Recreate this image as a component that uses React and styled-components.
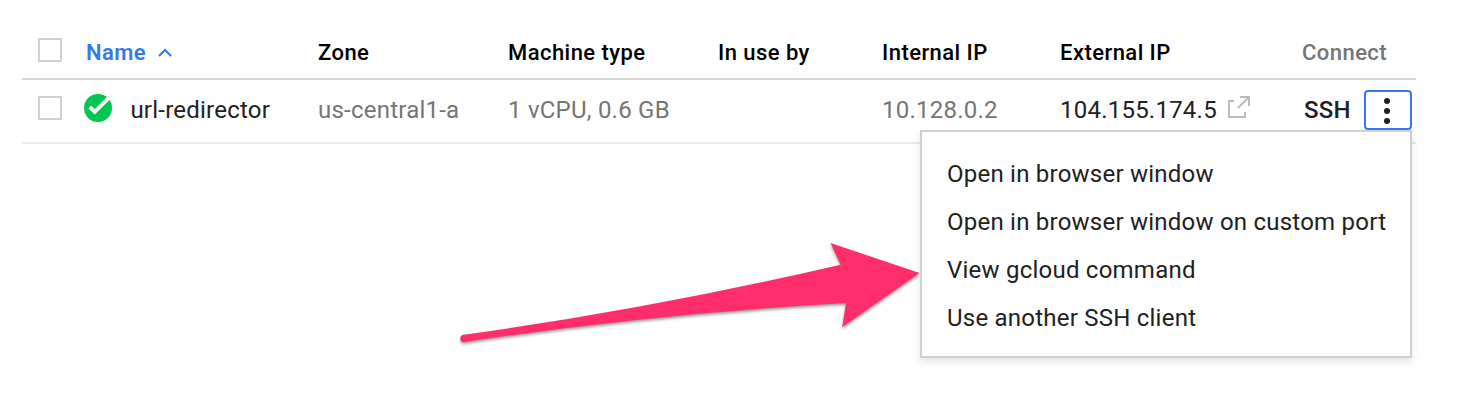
import React from 'react';
import styled, { createGlobalStyle } from 'styled-components';

const GlobalStyle = createGlobalStyle`
  body {
    margin: 0;
    background: #fff;
    font-family: Roboto, "Liberation Sans", sans-serif;
  }
`;

const Page = styled.main`
  position: relative;
  box-sizing: border-box;
  width: 1470px;
  height: 416px;
  padding: 22px 54px 0 22px;
  overflow: hidden;
`;

const Row = styled.div`
  display: grid;
  grid-template-columns: 64px 232px 190px 210px 164px 178px 242px 114px;
  box-sizing: border-box;
`;

const HeaderRow = styled(Row)`
  height: 58px;
  border-bottom: 2px solid #d6d6d6;
`;

const BodyRow = styled(Row)`
  height: 64px;
  border-bottom: 2px solid #ebebeb;
`;

const CheckCell = styled.div`
  padding: 16px 0 0 16px;
`;

const Checkbox = styled.div`
  box-sizing: border-box;
  width: 24px;
  height: 24px;
  border: 2px solid #d0d0d0;
`;

const HeaderCell = styled.div`
  display: flex;
  align-items: center;
  height: 56px;
  padding-top: 2px;
  color: ${(p) => p.$color || '#000'};
  font-size: 22px;
  font-weight: ${(p) => p.$weight || 500};
  letter-spacing: 0.45px;
  white-space: nowrap;
`;

const SortArrow = styled.svg`
  margin: 1px 0 0 12px;
`;

const Cell = styled.div`
  display: flex;
  align-items: center;
  height: 60px;
  color: ${(p) => (p.$strong ? '#212121' : '#757575')};
  font-size: 24px;
  letter-spacing: 0.23px;
  white-space: nowrap;
`;

const NameCell = styled(Cell)`
  gap: 18.4px;
  margin-left: -2px;
`;

const StatusIcon = styled.svg`
  flex: none;
  margin-top: -4px;
`;

const LinkIcon = styled.svg`
  flex: none;
  margin: -6px 0 0 11px;
`;

const ConnectCell = styled.div`
  display: flex;
  justify-content: space-between;
  padding: 0 4px 0 2px;
`;

const SshButton = styled.div`
  color: #212121;
  font-size: 24px;
  font-weight: 500;
  line-height: 60px;
  letter-spacing: 0.2px;
`;

const MoreButton = styled.div`
  display: flex;
  align-items: center;
  justify-content: center;
  box-sizing: border-box;
  width: 48px;
  height: 40px;
  margin-top: 10px;
  border: 2px solid #3878ee;
  border-radius: 4px;
`;

const Menu = styled.div`
  position: absolute;
  top: 130px;
  left: 920px;
  box-sizing: border-box;
  width: 492px;
  height: 228px;
  padding: 18px 25px 14px;
  border: 2px solid #d0d0d0;
  background: #fff;
  box-shadow: 0 4px 8px rgba(0, 0, 0, 0.1);
`;

const MenuItem = styled.div`
  height: 48px;
  color: #212121;
  font-size: 24px;
  line-height: 48px;
  letter-spacing: 0.23px;
  white-space: nowrap;
`;

const Arrow = styled.svg`
  position: absolute;
  top: 230px;
  left: 440px;
  filter: drop-shadow(0 2px 1.5px rgba(0, 0, 0, 0.4));
`;

const menuItems = [
  'Open in browser window',
  'Open in browser window on custom port',
  'View gcloud command',
  'Use another SSH client',
];

export default function App() {
  return (
    <>
      <GlobalStyle />
      <Page>
        <HeaderRow>
          <CheckCell><Checkbox /></CheckCell>
          <HeaderCell $color="#3878ee" $weight={600}>
            Name
            <SortArrow width="14" height="10" viewBox="0 0 14 10">
              <path d="M1 8 7 2l6 6" fill="none" stroke="#3878ee" strokeWidth="2" />
            </SortArrow>
          </HeaderCell>
          <HeaderCell>Zone</HeaderCell>
          <HeaderCell>Machine type</HeaderCell>
          <HeaderCell>In use by</HeaderCell>
          <HeaderCell>Internal IP</HeaderCell>
          <HeaderCell>External IP</HeaderCell>
          <HeaderCell $color="#757575">Connect</HeaderCell>
        </HeaderRow>
        <BodyRow>
          <CheckCell><Checkbox /></CheckCell>
          <NameCell $strong>
            <StatusIcon width="28" height="28" viewBox="0 0 28 28">
              <circle cx="14" cy="14" r="14" fill="#00c752" />
              <path d="M5.7 13 10.8 17.8 24.8 3.8" fill="none" stroke="#fff" strokeWidth="3.8" />
            </StatusIcon>
            url-redirector
          </NameCell>
          <Cell>us-central1-a</Cell>
          <Cell>1 vCPU, 0.6 GB</Cell>
          <Cell />
          <Cell>10.128.0.2</Cell>
          <Cell $strong>
            104.155.174.5
            <LinkIcon width="22" height="22" viewBox="0 0 22 22" fill="none" stroke="#bdbdbd" strokeWidth="2">
              <path d="M6 5H1v16h16v-5M12 1H21v9M21 1 10 12" />
            </LinkIcon>
          </Cell>
          <ConnectCell>
            <SshButton>SSH</SshButton>
            <MoreButton>
              <svg width="8" height="28" viewBox="0 0 8 28" fill="#212121">
                <circle cx="3" cy="5" r="3" />
                <circle cx="3" cy="15" r="3" />
                <circle cx="3" cy="25" r="3" />
              </svg>
            </MoreButton>
          </ConnectCell>
        </BodyRow>
        <Arrow width="485" height="120" viewBox="0 0 485 120">
          <path
            d="M24 104.8Q210 79 400.7 34.7L390.5 13 479.5 43 402.3 97 406 73Q210 84 24 112A3.6 3.6 0 0 1 24 104.8Z"
            fill="#ff2d6b"
          />
        </Arrow>
        <Menu>
          {menuItems.map((label) => (
            <MenuItem key={label}>{label}</MenuItem>
          ))}
        </Menu>
      </Page>
    </>
  );
}
